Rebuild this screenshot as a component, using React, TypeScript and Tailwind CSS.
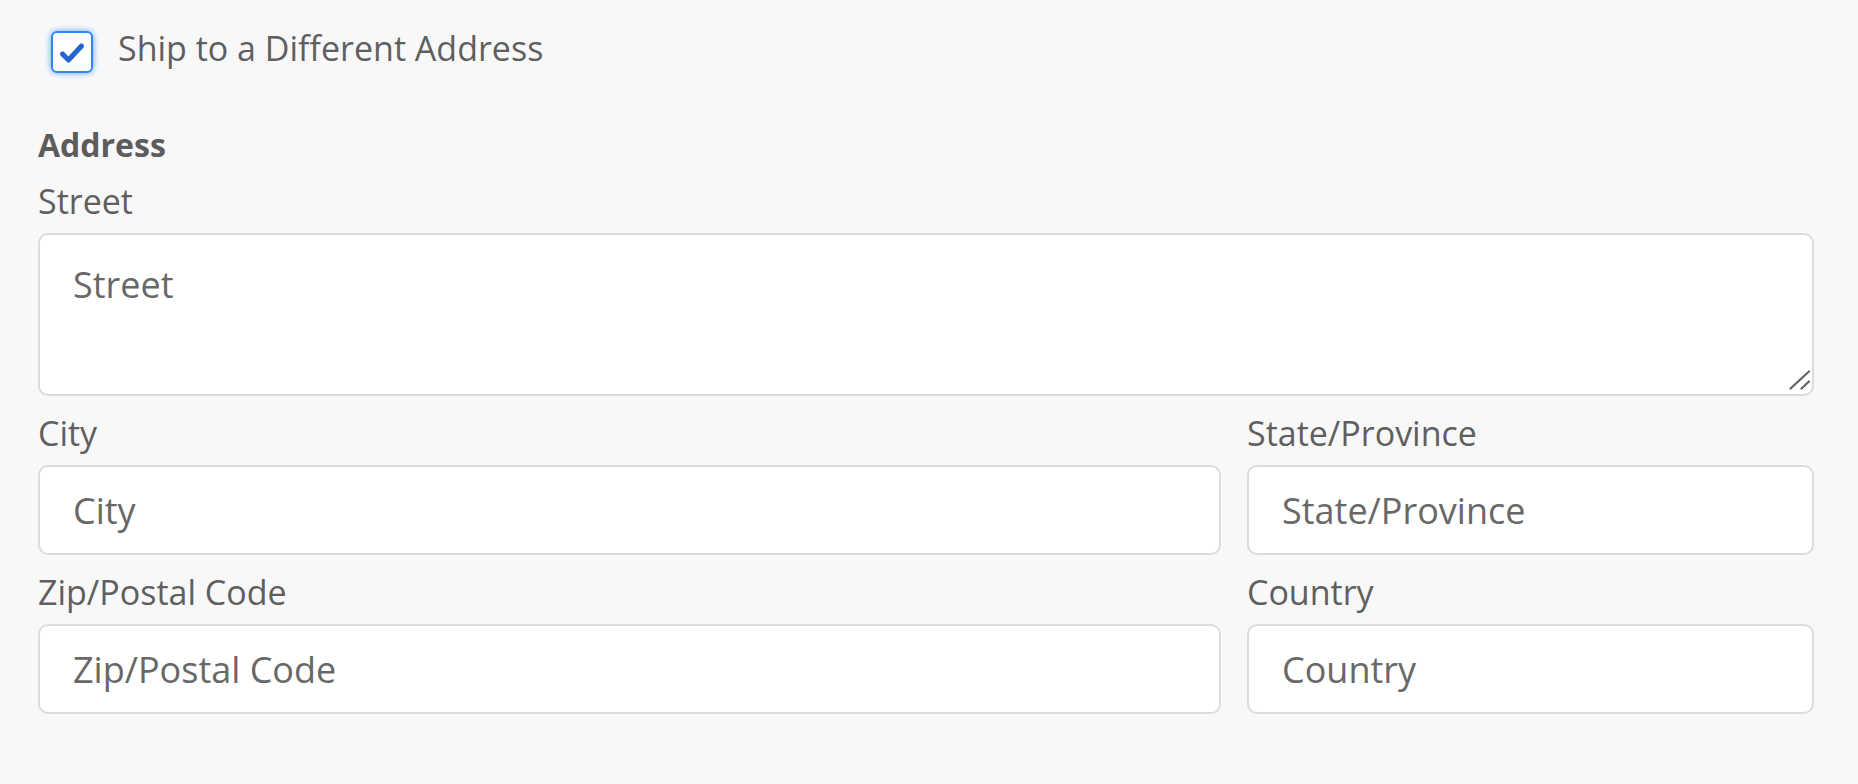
const Field: React.FC<{ label: string; className?: string }> = ({ label, className }) => {
  return (
    <div className={className}>
      <label className="mb-[12px] block text-[34px] leading-[40px]">{label}</label>
      <input
        type="text"
        placeholder={label}
        className="block h-[90px] w-full rounded-[10px] border-2 border-[#dcdcdc] bg-white px-[33px] text-[36px] outline-none placeholder:text-[#686868]"
      />
    </div>
  );
};

export default function App() {
  return (
    <div className="min-h-screen bg-[#f8f8f8] pt-[27px] pl-[38px] pr-[44px] font-['Open_Sans',sans-serif] text-[#5f5f5f]">
      <label className="flex items-start">
        <span className="ml-[13px] mt-[4px] flex h-[42px] w-[42px] items-center justify-center rounded-[6px] border-2 border-[#2f87ee] bg-white shadow-[0_0_6px_#5aa2f5]">
          <svg width="38" height="38" viewBox="0 0 38 38" fill="none">
            <polyline
              points="9.5,21 15.5,27 28.5,13"
              stroke="#2466cf"
              strokeWidth="5"
              strokeLinecap="round"
              strokeLinejoin="round"
            />
          </svg>
        </span>
        <span className="ml-[25px] text-[34px] leading-[42px]">Ship to a Different Address</span>
      </label>

      <h3 className="mt-[52px] text-[32px] font-bold leading-[40px] text-[#5c5c5c]">Address</h3>

      <div className="mt-[16px]">
        <label className="mb-[12px] block text-[34px] leading-[40px]">Street</label>
        <div className="relative">
          <textarea
            placeholder="Street"
            className="block h-[163px] w-full resize-none rounded-[10px] border-2 border-[#dcdcdc] bg-white px-[33px] pt-[28px] text-[36px] leading-[44px] outline-none placeholder:text-[#686868]"
          />
          {/* resize grip */}
          <svg
            className="pointer-events-none absolute right-[3px] bottom-[6px]"
            width="22"
            height="20"
            viewBox="0 0 22 20"
            fill="none"
          >
            <line x1="1.5" y1="18.5" x2="20" y2="1.5" stroke="#616161" strokeWidth="2.2" strokeLinecap="round" />
            <line x1="12.5" y1="18.5" x2="20" y2="11.5" stroke="#616161" strokeWidth="2.2" strokeLinecap="round" />
          </svg>
        </div>
      </div>

      <div className="mt-[17px] grid grid-cols-[minmax(0,1fr)_567px] gap-x-[26px] gap-y-[17px]">
        <Field label="City" />
        <Field label="State/Province" />
        <Field label="Zip/Postal Code" />
        <Field label="Country" />
      </div>
    </div>
  );
}
